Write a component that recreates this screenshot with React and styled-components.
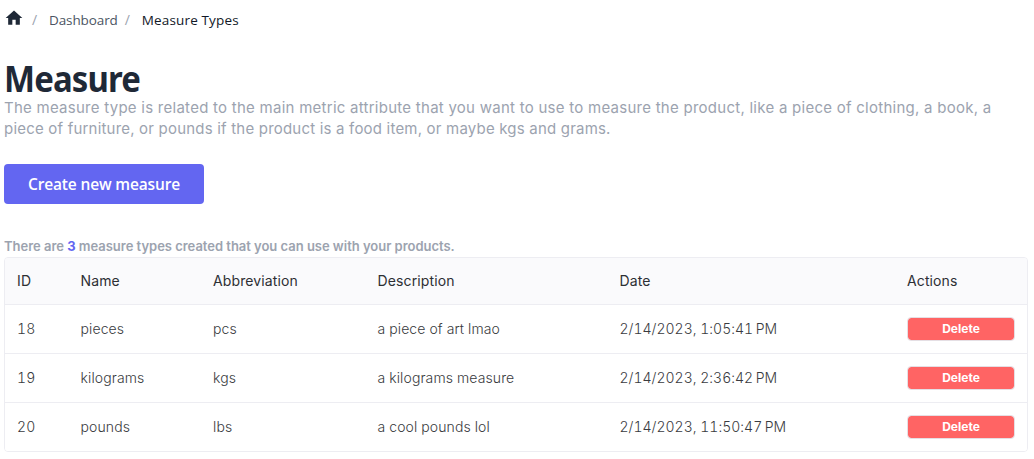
import React from "react";
import styled, { createGlobalStyle } from "styled-components";

const GlobalStyle = createGlobalStyle`
  *, *::before, *::after { box-sizing: border-box; }
  body { margin: 0; background: #fff; font-family: Inter, "Liberation Sans", sans-serif; }
  h1, p { margin: 0; }
`;

const Page = styled.main`
  width: 1034px;
  height: 459px;
  padding: 8px 6px 0 4px;
  overflow: hidden;
`;

const Breadcrumbs = styled.nav`
  display: flex;
  align-items: center;
  height: 24px;
  font: 400 14px/20px "Open Sans", "Noto Sans", sans-serif;
`;

const HomeIcon = styled.svg`
  width: 20px;
  height: 20px;
  margin-bottom: 5px;
  fill: #1f2937;
`;

const Separator = styled.span`
  width: 6px;
  margin: 0 ${(p) => p.$after}px 0 ${(p) => p.$before}px;
  color: #9ca3af;
`;

const Crumb = styled.span`
  white-space: nowrap;
  color: ${(p) => (p.$current ? "#111827" : "#4b5563")};
  font-size: 13.5px;
  font-weight: ${(p) => (p.$current ? 500 : 400)};
  letter-spacing: ${(p) => (p.$current ? "0.15px" : "-0.1px")};
`;

const Title = styled.h1`
  margin-top: 26px;
  height: 40px;
  color: #1f2937;
  font: 700 35px/42px "Noto Sans", sans-serif;
  letter-spacing: -0.9px;
  transform: scaleX(0.94);
  transform-origin: left;
`;

const Intro = styled.p`
  height: 42px;
  margin-top: -1px;
  color: #9ca3af;
  font: 400 15px/21px Inter, sans-serif;
  white-space: nowrap;
`;

const IntroLine = styled.span`
  display: block;
  letter-spacing: ${(p) => p.$tracking}px;
`;

const CreateButton = styled.button`
  display: block;
  width: 200px;
  height: 40px;
  margin-top: 25px;
  padding: 0;
  border: 0;
  border-radius: 4px;
  background: #6366f1;
  color: #fff;
  font: 600 15.5px/39px "Open Sans", sans-serif;
  letter-spacing: -0.15px;
  white-space: nowrap;
`;

const Summary = styled.p`
  margin: 32px 0 1px;
  height: 20px;
  color: #9ca3af;
  font: 600 13px/20px Inter, sans-serif;
  letter-spacing: -0.02px;
  white-space: nowrap;

  strong { color: #6366f1; font-weight: 700; }
`;

const Table = styled.div`
  width: 1024px;
  height: 195px;
  border: 1px solid #ededf2;
  border-radius: 4px;
  overflow: hidden;
`;

const Row = styled.div`
  display: grid;
  grid-template-columns: 63.5px 132.5px 164.5px 242px 287.5px 108px;
  align-items: center;
  height: ${(p) => (p.$head ? 47 : 49)}px;
  padding-left: 12px;
  border-bottom: 1px solid #ededf2;
  background: ${(p) => (p.$head ? "#fafafc" : "#fff")};
  color: ${(p) => (p.$head ? "#2d2f34" : "#393b40")};
  font-size: 14px;
  font-weight: ${(p) => (p.$head ? 400 : 300)};
  font-variant-numeric: tabular-nums;
  line-height: 20px;
  white-space: nowrap;

  &:last-child { border-bottom-color: transparent; }
`;

const Cell = styled.span`
  letter-spacing: ${(p) => p.$tracking || 0.12}px;
`;

const DeleteButton = styled.button`
  width: 108px;
  height: 24px;
  padding: 0;
  border: 1px solid #e5dfe4;
  border-radius: 4px;
  background: #ff6464;
  background-clip: padding-box;
  color: #fff;
  font: 700 12px/22px Inter, sans-serif;
`;

const columns = ["ID", "Name", "Abbreviation", "Description", "Date", "Actions"];

const measures = [
  { id: 18, name: "pieces", abbreviation: "pcs", description: "a piece of art lmao", date: "2/14/2023, 1:05:41\u202fPM" },
  { id: 19, name: "kilograms", abbreviation: "kgs", description: "a kilograms measure", date: "2/14/2023, 2:36:42\u202fPM" },
  { id: 20, name: "pounds", abbreviation: "lbs", description: "a cool pounds lol", date: "2/14/2023, 11:50:47\u202fPM" },
];

export default function App() {
  return (
    <Page>
      <GlobalStyle />
      <Breadcrumbs aria-label="Breadcrumb">
        <HomeIcon viewBox="0 0 24 24" aria-hidden="true">
          <path d="M10 20v-6h4v6h5v-8h3L12 3 2 12h3v8z" />
        </HomeIcon>
        <Separator $before={8} $after={11}>/</Separator>
        <Crumb>Dashboard</Crumb>
        <Separator $before={7} $after={11}>/</Separator>
        <Crumb $current>Measure Types</Crumb>
      </Breadcrumbs>
      <Title>Measure</Title>
      <Intro>
        <IntroLine $tracking={0.26}>
          The measure type is related to the main metric attribute that you want to use to measure the product, like a piece of clothing, a book, a
        </IntroLine>
        <IntroLine $tracking={0.2}>
          piece of furniture, or pounds if the product is a food item, or maybe kgs and grams.
        </IntroLine>
      </Intro>
      <CreateButton>Create new measure</CreateButton>
      <Summary>
        There are <strong>{measures.length}</strong> measure types created that you can use with your products.
      </Summary>
      <Table>
        <Row $head>
          {columns.map((label) => <Cell key={label}>{label}</Cell>)}
        </Row>
        {measures.map((m) => (
          <Row key={m.id}>
            <Cell>{m.id}</Cell>
            <Cell>{m.name}</Cell>
            <Cell>{m.abbreviation}</Cell>
            <Cell>{m.description}</Cell>
            <Cell $tracking={0.01}>{m.date}</Cell>
            <DeleteButton>Delete</DeleteButton>
          </Row>
        ))}
      </Table>
    </Page>
  );
}
